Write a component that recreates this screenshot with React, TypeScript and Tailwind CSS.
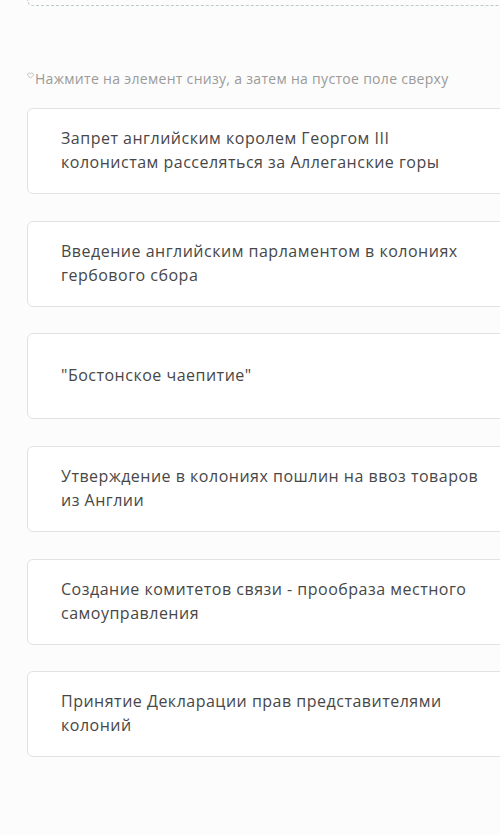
import React from 'react';

const items = [
  'Запрет английским королем Георгом III колонистам расселяться за Аллеганские горы',
  'Введение английским парламентом в колониях гербового сбора',
  '"Бостонское чаепитие"',
  'Утверждение в колониях пошлин на ввоз товаров из Англии',
  'Создание комитетов связи - прообраза местного самоуправления',
  'Принятие Декларации прав представителями колоний',
];

export default function App() {
  return (
    <div className="w-[500px] h-[835px] overflow-hidden bg-[#fcfcfc] font-['Open_Sans',sans-serif]">
      <div className="pl-[27px]">
        {/* drop zone above, mostly scrolled out */}
        <div className="h-[6px] w-[520px] border-b border-l border-dashed border-[#b9cdc6] rounded-bl-md" />

        <div className="mt-[62px] flex items-center text-[14px] tracking-[0.3px] text-[#9a9a9a]">
          <svg width="7" height="7" viewBox="0 0 8 8" className="mr-[1px] -mt-[6px]">
            <path d="M4 7 L1 4 A1.5 1.5 0 0 1 4 2 A1.5 1.5 0 0 1 7 4 Z" fill="none" stroke="#b8b8b8" strokeWidth="1" />
          </svg>
          <span>Нажмите на элемент снизу, а затем на пустое поле сверху</span>
        </div>

        <div className="mt-[19px] flex flex-col gap-[26.7px]">
          {items.map((t, i) => (
            <div
              key={i}
              className="w-[520px] h-[86px] flex items-center bg-white border border-[#e2e2e2] rounded-md pl-[33px] pb-[2px]"
            >
              <p className="text-[16px] leading-[24px] tracking-[0.5px] text-[#474747] max-w-[420px]">{t}</p>
            </div>
          ))}
        </div>
      </div>
    </div>
  );
}
